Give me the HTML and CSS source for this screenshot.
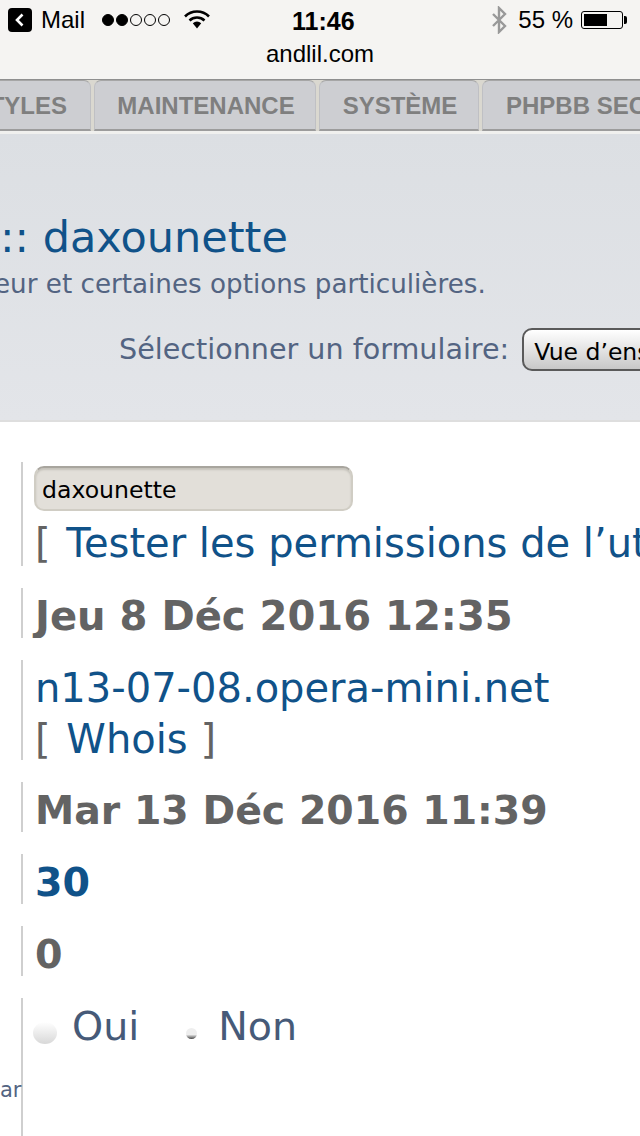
FILE: index.html
```html
<!DOCTYPE html>
<html lang="fr">
  <head>
    <meta charset="UTF-8" />
    <meta name="viewport" content="width=device-width, initial-scale=1.0" />
    <title>andlil.com</title>
    <link rel="stylesheet" href="styles.css">
  </head>
  <body>
    <div class="status-area">
      <div class="status-bar">
        <div class="status-left">
          <svg class="back-icon" width="24" height="24" viewBox="0 0 24 24">
            <rect width="24" height="24" rx="4" fill="#000" />
            <path d="M14.5 6.5 L9 12 L14.5 17.5" fill="none" stroke="#fff" stroke-width="2.6" />
          </svg>
          <span class="status-mail">Mail</span>
          <span class="signal">
            <i class="dot on"></i><i class="dot on"></i><i class="dot"></i><i class="dot"></i><i class="dot"></i>
          </span>
          <svg class="wifi-icon" width="26" height="20" viewBox="0 0 26 20">
            <path d="M1 6.5 A17 17 0 0 1 25 6.5" fill="none" stroke="#000" stroke-width="2.6" />
            <path d="M5.5 10.5 A11 11 0 0 1 20.5 10.5" fill="none" stroke="#000" stroke-width="2.6" />
            <path d="M8.8 13.2 A6 6 0 0 1 17.2 13.2 L13 18.5 Z" fill="#000" />
          </svg>
        </div>
        <div class="status-time">11:46</div>
        <div class="status-right">
          <svg class="bt-icon" width="16" height="28" viewBox="0 0 16 28">
            <path d="M2 8 L14 20 L8 26 L8 2 L14 8 L2 20" fill="none" stroke="#999" stroke-width="2.4" />
          </svg>
          <span class="status-batt">55 %</span>
          <span class="battery"><span class="battery-fill"></span></span>
          <span class="battery-tip"></span>
        </div>
      </div>
      <div class="url-line">andlil.com</div>
    </div>

    <div class="tabs">
      <div class="tab tab-styles">STYLES</div>
      <div class="tab tab-maint">MAINTENANCE</div>
      <div class="tab tab-sys">SYSTÈME</div>
      <div class="tab tab-sec">PHPBB SECURITY</div>
    </div>

    <div class="head-panel">
      <h1 class="head-title">:: daxounette</h1>
      <p class="head-desc">eur et certaines options particulières.</p>
      <div class="select-line">
        <span class="select-label">Sélectionner un formulaire:</span>
        <span class="select-btn">Vue d’ensemble</span>
      </div>
    </div>

    <div class="rows">
      <div class="row row-user">
        <div class="user-input">daxounette</div>
        <div class="user-link"><span class="bracket">[</span> <a>Tester les permissions de l’utilisateur</a></div>
      </div>
      <div class="row"><b class="val val-reg">Jeu 8 Déc 2016 12:35</b></div>
      <div class="row row-host">
        <a>n13-07-08.opera-mini.net</a>
        <div><span class="bracket">[</span> <a>Whois</a> <span class="bracket-end">]</span></div>
      </div>
      <div class="row"><b class="val val-last">Mar 13 Déc 2016 11:39</b></div>
      <div class="row"><b class="val val-link">30</b></div>
      <div class="row"><b class="val">0</b></div>
      <div class="row row-last">
        <span class="side-label">ar</span>
        <div class="radios">
          <span class="radio-big"></span><span class="radio-text">Oui</span>
          <span class="radio-small"></span><span class="radio-text">Non</span>
        </div>
      </div>
    </div>
  </body>
</html>
```

FILE: styles.css
```css
html,
body {
  margin: 0;
  height: 1136px;
  overflow: hidden;
}

body {
  width: 640px;
  background-color: #fff;
  font-family: "DejaVu Sans", sans-serif;
  color: #636363;
}

a {
  color: #105289;
}

/* barre iOS */
.status-area {
  height: 80px;
  background-color: #f5f4f2;
  font-family: "Liberation Sans", sans-serif;
  color: #000;
  box-sizing: border-box;
  border-bottom: 1px solid #8f8f8f;
}

.status-bar {
  position: relative;
  display: flex;
  justify-content: space-between;
  align-items: center;
  height: 40px;
  padding: 0 0 0 8px;
}

.status-left {
  display: flex;
  align-items: center;
}

.status-mail {
  margin-left: 9px;
  font-size: 24px;
}

.signal {
  display: flex;
  gap: 2px;
  margin-left: 17px;
}

.dot {
  display: block;
  width: 10px;
  height: 10px;
  border: 1px solid #000;
  border-radius: 50%;
  margin: 0;
}

.dot.on {
  background-color: #000;
}

.wifi-icon {
  margin-left: 14px;
}

.status-time {
  position: absolute;
  left: 292px;
  top: 7px;
  font-size: 25px;
  font-weight: 700;
}

.status-right {
  display: flex;
  align-items: center;
  padding-right: 13px;
}

.status-batt {
  margin-left: 11px;
  font-size: 24px;
}

.battery {
  display: block;
  width: 42px;
  height: 18px;
  margin-left: 8px;
  padding: 2px;
  box-sizing: border-box;
  border: 1px solid #000;
  border-radius: 3px;
}

.battery-fill {
  display: block;
  width: 23px;
  height: 100%;
  background-color: #000;
}

.battery-tip {
  width: 3px;
  height: 8px;
  margin-left: 1px;
  background-color: #000;
  border-radius: 0 2px 2px 0;
}

.url-line {
  text-align: center;
  font-size: 24px;
  line-height: 28px;
}

/* onglets */
.tabs {
  display: flex;
  gap: 3px;
  height: 54px;
  box-sizing: border-box;
  background-color: #dad8d0;
  border-bottom: 3px solid #f0f0ee;
  overflow: hidden;
  font-family: "Liberation Sans", sans-serif;
}

.tab {
  flex: none;
  display: flex;
  align-items: center;
  justify-content: center;
  box-sizing: border-box;
  height: 51px;
  padding-top: 1px;
  background-color: #cdced2;
  border: 1px solid #bfc0c4;
  border-top-color: #a6a6a6;
  border-bottom: 2px solid #9c9c9c;
  border-radius: 7px 7px 0 0;
  font-size: 24px;
  font-weight: 700;
  color: #7f7f7f;
  white-space: nowrap;
}

.tab-styles {
  width: 150px;
  margin-left: -59px;
  justify-content: flex-end;
  padding-right: 23px;
}

.tab-maint {
  width: 222px;
  padding-left: 2px;
}

.tab-sys {
  width: 160px;
  padding-left: 2px;
}

.tab-sec {
  width: 260px;
}

/* bloc titre */
.head-panel {
  height: 288px;
  padding-top: 74px;
  box-sizing: border-box;
  background: linear-gradient(#dcdfe3, #e3e5e9);
  border-bottom: 2px solid #dedede;
  overflow: hidden;
  white-space: nowrap;
}

.head-title {
  margin: 0;
  font-size: 43px;
  font-weight: 400;
  line-height: 58px;
  color: #105289;
}

.head-desc {
  margin: 3px 0 0 -6px;
  font-size: 26.2px;
  line-height: 30px;
  color: #536482;
}

.select-line {
  display: flex;
  align-items: center;
  margin-top: 29px;
  padding-left: 119px;
}

.select-label {
  font-size: 28.6px;
  margin-top: -2px;
  color: #536482;
}

.select-btn {
  flex: none;
  margin-left: 13px;
  padding: 2px 10px 0;
  width: 180px;
  height: 43px;
  line-height: 40px;
  box-sizing: border-box;
  border: 2px solid #5a5a5a;
  border-radius: 10px;
  background: linear-gradient(#fff, #c8c8c8);
  font-size: 23.5px;
  color: #000;
  overflow: hidden;
}

/* lignes du formulaire */
.rows {
  display: flex;
  flex-direction: column;
  gap: 22px;
  padding-top: 40px;
}

.row {
  position: relative;
  height: 50px;
  margin-left: 21px;
  padding-left: 12px;
  border-left: 2px solid #cfcfcf;
  white-space: nowrap;
  overflow: hidden;
  font-size: 40px;
  line-height: 56px;
}

.val {
  font-size: 39.6px;
  font-weight: 700;
}

.val-reg {
  font-size: 40.1px;
}

.val-last {
  font-size: 39.4px;
}

.val-link {
  color: #105289;
}

.row-user {
  height: 104px;
}

.user-input {
  width: 319px;
  height: 45px;
  margin-top: 4px;
  margin-left: -1px;
  padding-left: 6px;
  box-sizing: border-box;
  border: 2px solid #d0cdc4;
  border-top-color: #a8a59e;
  border-radius: 10px;
  background-color: #e2dfd9;
  box-shadow: inset 0 2px 2px #c4c1ba;
  font-size: 23.6px;
  line-height: 44px;
  color: #000;
}

.user-link {
  margin-top: 7px;
  line-height: 50px;
}

.bracket {
  margin-right: 3px;
  color: #636363;
  font-weight: 400;
}

.bracket-end {
  color: #636363;
}

.row-host {
  height: 97px;
  padding-top: 3px;
  line-height: 51px;
}

.row-last {
  height: 138px;
  overflow: visible;
}

.side-label {
  position: absolute;
  left: -23px;
  top: 78px;
  font-size: 21px;
  line-height: 28px;
  color: #536482;
}

.radios {
  display: flex;
  align-items: center;
  height: 56px;
  color: #465a78;
}

.radio-big {
  width: 24px;
  height: 22px;
  margin-top: 13px;
  margin-left: -2px;
  border-radius: 50%;
  background: linear-gradient(#fff, #d8d8d8);
}

.radio-small {
  width: 11px;
  height: 11px;
  margin-top: 15px;
  margin-left: 47px;
  border-radius: 50%;
  background: linear-gradient(#eee 60%, #444);
}

.radio-text {
  margin-left: 15px;
  font-size: 39.6px;
}

.radio-small + .radio-text {
  margin-left: 21px;
}
```
